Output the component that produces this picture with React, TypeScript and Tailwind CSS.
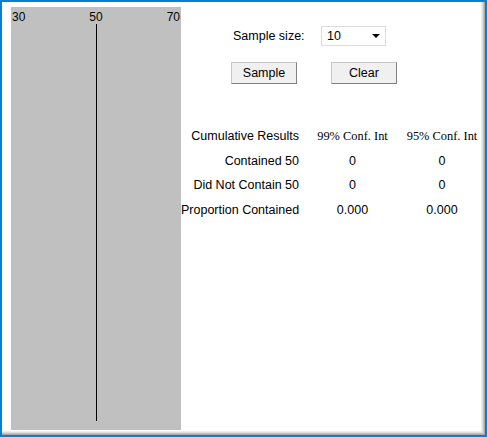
import React from "react";

const sans = { fontFamily: '"Liberation Sans", Arial, sans-serif' };
const serif = { fontFamily: '"Liberation Serif", "Times New Roman", serif' };

export default function App() {
  return (
    <div className="w-[487px] h-[437px] bg-[#0a7fcf] p-[2px]" style={sans}>
      <div className="w-full h-full bg-[#a8a8a8] pr-px pb-px">
        <div className="w-full h-full bg-[#c4c4c4] pr-px pb-px">
          <div className="w-full h-full bg-[#dedede] pr-px pb-px">
            <div className="w-full h-full bg-[#efefef] pr-px pb-px">
              <div className="w-full h-full bg-white flex flex-row pl-[9px] pt-[5px]">
                {/* gray panel */}
                <div className="w-[170px] h-[423px] bg-[#c0c0c0] relative shrink-0 text-[12px] text-black">
                  <div className="flex justify-between px-px pt-[4px] leading-[13px]">
                    <span>30</span>
                    <span>50</span>
                    <span>70</span>
                  </div>
                  <div className="absolute left-[85px] top-[17px] w-px h-[397px] bg-black" />
                </div>
                {/* right content */}
                <div className="flex flex-col flex-1 text-[12.5px] text-black">
                  <div className="flex items-center mt-[19px] h-[20px]">
                    <span className="ml-[52px] w-[88px]">Sample size:</span>
                    <div className="w-[65px] h-[20px] border border-[#dcdcdc] bg-white flex items-center justify-between pl-[5px] pr-[5px]">
                      <span>10</span>
                      <svg width="8" height="4" viewBox="0 0 8 4">
                        <polygon points="0,0 8,0 4,4" fill="#000" />
                      </svg>
                    </div>
                  </div>
                  <div className="flex mt-[16px]">
                    <button className="ml-[50px] w-[66px] h-[22px] bg-[#f0f0f0] border border-t-[#c8c8c8] border-l-[#c8c8c8] border-r-[#808080] border-b-[#808080] text-[12.5px] text-black">
                      Sample
                    </button>
                    <button className="ml-[34px] w-[66px] h-[22px] bg-[#f0f0f0] border border-t-[#c8c8c8] border-l-[#c8c8c8] border-r-[#808080] border-b-[#808080] text-[12.5px] text-black">
                      Clear
                    </button>
                  </div>
                  <div className="grid grid-cols-[118px_107px_72px] mt-[45px] leading-[14px] gap-y-[10.7px] whitespace-nowrap">
                    <span className="text-right">Cumulative Results</span>
                    <span className="text-center text-[12.4px]" style={serif}>99% Conf. Int</span>
                    <span className="text-center text-[12.4px]" style={serif}>95% Conf. Int</span>

                    <span className="text-right">Contained 50</span>
                    <span className="text-center">0</span>
                    <span className="text-center">0</span>

                    <span className="text-right">Did Not Contain 50</span>
                    <span className="text-center">0</span>
                    <span className="text-center">0</span>

                    <span className="text-right">Proportion Contained</span>
                    <span className="text-center">0.000</span>
                    <span className="text-center">0.000</span>
                  </div>
                </div>
              </div>
            </div>
          </div>
        </div>
      </div>
    </div>
  );
}
